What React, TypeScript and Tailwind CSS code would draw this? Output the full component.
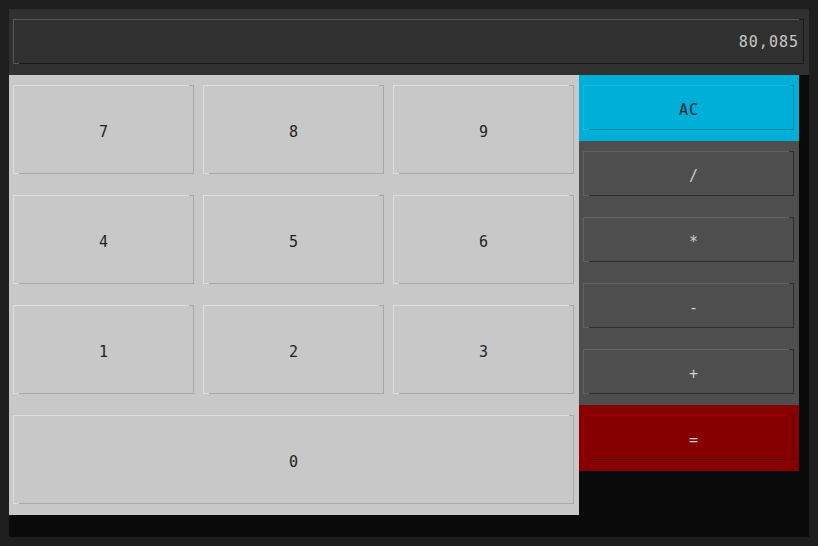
import React from "react";

type Tone = { bg: string; light: string; dark: string; text: string; lightBg: string; darkBg: string };

const KEY: Tone = {
  bg: "bg-[#c8c8c8]",
  light: "border-t-[#dedede] border-l-[#dedede]",
  dark: "border-b-[#a8a8a8] border-r-[#a8a8a8]",
  text: "text-[#1e1e1e]",
  lightBg: "bg-[#dedede]",
  darkBg: "bg-[#a8a8a8]",
};
const OP: Tone = {
  bg: "bg-[#4e4e4e]",
  light: "border-t-[#626262] border-l-[#626262]",
  dark: "border-b-[#2c2c2c] border-r-[#2c2c2c]",
  text: "text-[#cfcfcf]",
  lightBg: "bg-[#626262]",
  darkBg: "bg-[#2c2c2c]",
};
const AC: Tone = {
  bg: "bg-[#00afd7]",
  light: "border-t-[#14b9e2] border-l-[#14b9e2]",
  dark: "border-b-[#0088a8] border-r-[#0088a8]",
  text: "text-[#0d2730]",
  lightBg: "bg-[#14b9e2]",
  darkBg: "bg-[#0088a8]",
};
const EQ: Tone = {
  bg: "bg-[#870000]",
  light: "border-t-[#a50000] border-l-[#a50000]",
  dark: "border-b-[#5a0000] border-r-[#5a0000]",
  text: "text-[#e0d0d0]",
  lightBg: "bg-[#a50000]",
  darkBg: "bg-[#5a0000]",
};

function Btn({ label, tone, h, shift }: { label: string; tone: Tone; h: string; shift?: boolean }) {
  return (
    <div
      className={`relative ${h} border ${tone.light} ${tone.dark} ${tone.text} flex items-center justify-center pt-[4px] text-[15px] leading-[22px] tracking-[1px]`}
    >
      <span className={`absolute left-[-1px] bottom-[-1px] w-[6px] h-[1px] ${tone.lightBg}`} />
      <span className={`absolute right-[-1px] top-[-1px] w-[5px] h-[1px] ${tone.darkBg}`} />
      <span className={shift ? "pl-[11px]" : "pl-[1px]"}>{label}</span>
    </div>
  );
}

function KeyCell({ label, span }: { label: string; span?: boolean }) {
  return (
    <div className={`${span ? "col-span-3" : ""} pt-[10px] pl-[4px] pr-[5px]`}>
      <Btn label={label} tone={KEY} h="h-[89px]" />
    </div>
  );
}

function OpCell({ label, tone }: { label: string; tone: Tone }) {
  return (
    <div className={`h-[66px] ${tone.bg} pt-[10px] pl-[4px] pr-[5px]`}>
      <Btn label={label} tone={tone} h="h-[45px]" shift={label.length === 1} />
    </div>
  );
}

export default function App() {
  return (
    <div
      className="w-[818px] h-[546px] bg-[#1e1e1e] p-[9px]"
      style={{ fontFamily: '"DejaVu Sans Mono", "Liberation Mono", monospace' }}
    >
      <div className="w-full h-full bg-[#0a0a0a] flex flex-col">
        <div className="h-[66px] bg-[#303030] pt-[10px] pl-[4px] pr-[5px]">
          <div className="relative h-[45px] border border-t-[#585858] border-l-[#585858] border-b-[#191919] border-r-[#191919] flex justify-end items-start pt-[11px] pr-[4px] text-[15px] leading-[22px] tracking-[1px] text-[#c8c8c8]">
            <span className="absolute left-[-1px] bottom-[-1px] w-[6px] h-[1px] bg-[#585858]" />
            <span className="absolute right-[-1px] top-[-1px] w-[5px] h-[1px] bg-[#191919]" />
            80,085
          </div>
        </div>
        <div className="flex">
          <div className="w-[570px] h-[440px] bg-[#c8c8c8] grid grid-cols-3 grid-rows-4">
            <KeyCell label="7" />
            <KeyCell label="8" />
            <KeyCell label="9" />
            <KeyCell label="4" />
            <KeyCell label="5" />
            <KeyCell label="6" />
            <KeyCell label="1" />
            <KeyCell label="2" />
            <KeyCell label="3" />
            <KeyCell label="0" span />
          </div>
          <div className="w-[220px] flex flex-col">
            <OpCell label="AC" tone={AC} />
            <OpCell label="/" tone={OP} />
            <OpCell label="*" tone={OP} />
            <OpCell label="-" tone={OP} />
            <OpCell label="+" tone={OP} />
            <OpCell label="=" tone={EQ} />
          </div>
        </div>
      </div>
    </div>
  );
}
